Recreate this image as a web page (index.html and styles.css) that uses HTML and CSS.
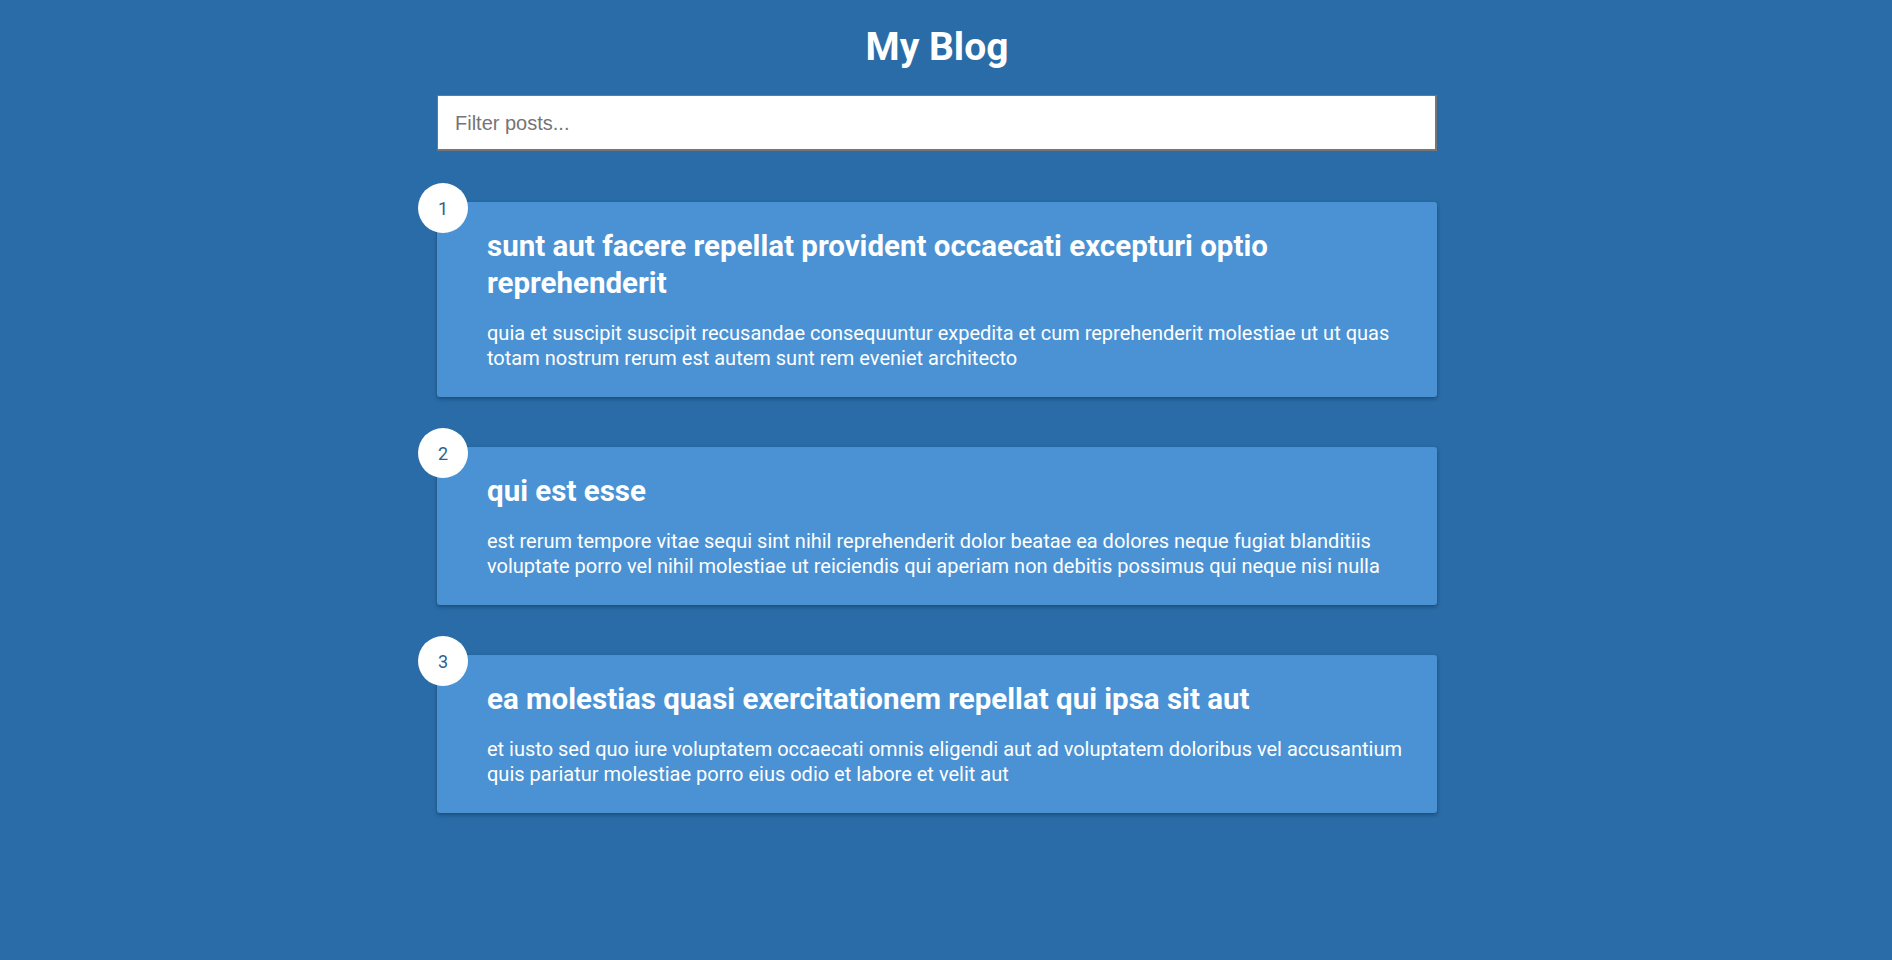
FILE: index.html
```html
<!DOCTYPE html>
<html lang="en">
<head>
<meta charset="utf-8">
<title>My Blog</title>
<link rel="stylesheet" href="styles.css">
</head>
<body>
<main class="container">
  <h1 class="page-title">My Blog</h1>
  <input class="filter" type="text" placeholder="Filter posts...">
  <section class="posts">
    <article class="post">
      <div class="post-number">1</div>
      <h2 class="post-title">sunt aut facere repellat provident occaecati excepturi optio reprehenderit</h2>
      <p class="post-body">quia et suscipit suscipit recusandae consequuntur expedita et cum reprehenderit molestiae ut ut quas totam nostrum rerum est autem sunt rem eveniet architecto</p>
    </article>
    <article class="post">
      <div class="post-number">2</div>
      <h2 class="post-title">qui est esse</h2>
      <p class="post-body">est rerum tempore vitae sequi sint nihil reprehenderit dolor beatae ea dolores neque fugiat blanditiis voluptate porro vel nihil molestiae ut reiciendis qui aperiam non debitis possimus qui neque nisi nulla</p>
    </article>
    <article class="post">
      <div class="post-number">3</div>
      <h2 class="post-title">ea molestias quasi exercitationem repellat qui ipsa sit aut</h2>
      <p class="post-body">et iusto sed quo iure voluptatem occaecati omnis eligendi aut ad voluptatem doloribus vel accusantium quis pariatur molestiae porro eius odio et labore et velit aut</p>
    </article>
  </section>
</main>
</body>
</html>
```
FILE: styles.css
```css
* {
  box-sizing: border-box;
}

html, body {
  margin: 0;
}

body {
  background: #296ca8;
  font-family: Roboto, "Liberation Sans", Arial, sans-serif;
  color: #ffffff;
  padding: 0 18px 40px 0;
  min-height: 960px;
}

.container {
  width: 1000px;
  margin: 0 auto;
  display: flex;
  flex-direction: column;
}

.page-title {
  margin: 24px 0 25px;
  text-align: center;
  font-size: 39px;
  font-weight: 700;
  line-height: normal;
}

.filter {
  width: 100%;
  height: 56px;
  padding: 2px 17px 0;
  border: 1px solid #767676;
  border-width: 1px 2px 2px 1px;
  background: #ffffff;
  font-family: "Liberation Sans", Arial, sans-serif;
  font-size: 20px;
  color: #333333;
  outline: none;
}

.filter::placeholder {
  color: #757575;
}

.posts {
  display: flex;
  flex-direction: column;
  gap: 50px;
  margin-top: 51px;
}

.post {
  position: relative;
  background: #4a92d4;
  border-radius: 3px;
  padding: 26px 30px 26px 50px;
  box-shadow: 0 2px 4px rgba(0, 0, 0, 0.3);
}

.post-number {
  position: absolute;
  top: -19px;
  left: -19px;
  width: 50px;
  height: 50px;
  border-radius: 50%;
  background: #ffffff;
  color: #2d5f8f;
  font-size: 18px;
  display: flex;
  align-items: center;
  justify-content: center;
}

.post-title {
  margin: 0 0 19px;
  font-size: 29.5px;
  font-weight: 700;
  line-height: 37px;
}

.post-body {
  margin: 0;
  font-size: 20px;
  line-height: 25px;
}
```
